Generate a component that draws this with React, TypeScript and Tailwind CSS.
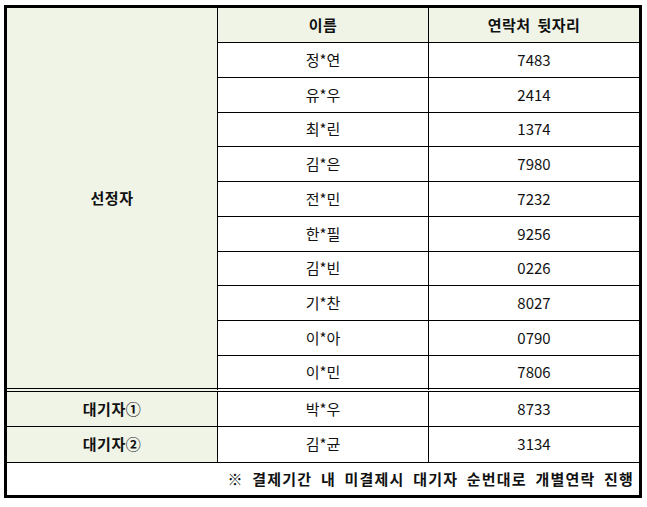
const winners = [
  { name: '정*연', phone: '7483', h: 'h-[35px]' },
  { name: '유*우', phone: '2414', h: 'h-[35px]' },
  { name: '최*린', phone: '1374', h: 'h-[34px]' },
  { name: '김*은', phone: '7980', h: 'h-[35px]' },
  { name: '전*민', phone: '7232', h: 'h-[35px]' },
  { name: '한*필', phone: '9256', h: 'h-[35px]' },
  { name: '김*빈', phone: '0226', h: 'h-[34px]' },
  { name: '기*찬', phone: '8027', h: 'h-[35px]' },
  { name: '이*아', phone: '0790', h: 'h-[35px]' },
]

const waitlist = [
  { label: '대기자①', name: '박*우', phone: '8733', h: 'h-[35px]' },
  { label: '대기자②', name: '김*균', phone: '3134', h: 'h-[36px]' },
]

const cell = 'flex items-center justify-center border-b border-black'

export default function App() {
  return (
    <div className="min-h-screen bg-white pl-[4px] pt-[5px] font-['Noto_Sans_CJK_KR','Noto_Sans',sans-serif] text-[15px] text-[#111]">
      <div className="w-[638px] border-[3px] border-black">
        <div className="flex">
          {/* 선정자 block */}
          <div className="flex w-[211px] items-center justify-center border-r border-b-[4px] border-double border-r-black border-b-black bg-[#eff4e7] font-bold tracking-[0.5px]">
            선정자
          </div>
          <div className="flex flex-1 flex-col">
            <div className="flex h-[35px]">
              <div className={`${cell} w-[211px] border-r bg-[#eff4e7] font-bold tracking-[0.5px]`}>이름</div>
              <div className={`${cell} flex-1 bg-[#eff4e7] font-bold tracking-[0.5px] [word-spacing:3px]`}>연락처 뒷자리</div>
            </div>
            {winners.map((w) => (
              <div key={w.phone} className={`flex ${w.h}`}>
                <div className={`${cell} w-[211px] border-r`}>{w.name}</div>
                <div className={`${cell} flex-1`}>{w.phone}</div>
              </div>
            ))}
            <div className="flex h-[36px]">
              <div className="flex w-[211px] items-center justify-center border-r border-b-[4px] border-double border-r-black border-b-black">
                이*민
              </div>
              <div className="flex flex-1 items-center justify-center border-b-[4px] border-double border-black">7806</div>
            </div>
          </div>
        </div>
        {waitlist.map((r) => (
          <div key={r.label} className={`flex ${r.h}`}>
            <div className={`${cell} w-[211px] border-r bg-[#eff4e7] font-bold tracking-[0.5px]`}>{r.label}</div>
            <div className={`${cell} w-[211px] border-r`}>{r.name}</div>
            <div className={`${cell} flex-1`}>{r.phone}</div>
          </div>
        ))}
        <div className="flex h-[32px] items-center justify-end pr-[5px] font-bold tracking-[1.2px] [word-spacing:4px]">
          ※ 결제기간 내 미결제시 대기자 순번대로 개별연락 진행
        </div>
      </div>
    </div>
  )
}
